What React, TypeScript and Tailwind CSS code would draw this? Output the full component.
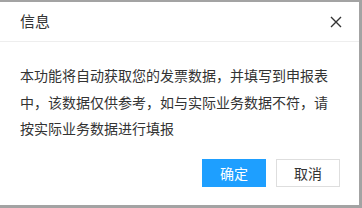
export default function App() {
  return (
    <div className="h-[208px] w-[362px] bg-[#a3a3a3] pt-[2px] pr-[3px] pb-[3px]" style={{ fontFamily: '"Noto Sans CJK SC", sans-serif' }}>
      <div className="flex h-full w-full flex-col bg-white text-[#333]">
        {/* Header */}
        <div className="flex h-[40px] shrink-0 items-center justify-between border-b border-[#eee] pl-5 pr-[17px]">
          <span className="text-[15px]">信息</span>
          <svg width="12" height="12" viewBox="0 0 12 12" fill="none">
            <path d="M1 1l10 10M11 1L1 11" stroke="#333" strokeWidth="1.4" />
          </svg>
        </div>

        {/* Body */}
        <div className="px-5 pt-[20px] text-[14px] leading-[26.5px]">
          本功能将自动获取您的发票数据，并填写到申报表中，该数据仅供参考，如与实际业务数据不符，请按实际业务数据进行填报
        </div>

        {/* Buttons */}
        <div className="mt-auto flex justify-end gap-[10px] pr-[19px] pb-[18px]">
          <button className="h-[28px] w-[64px] bg-[#1e9fff] text-[14px] text-white">确定</button>
          <button className="h-[28px] w-[64px] border border-[#dedede] bg-white text-[14px] text-[#333]">取消</button>
        </div>
      </div>
    </div>
  );
}
